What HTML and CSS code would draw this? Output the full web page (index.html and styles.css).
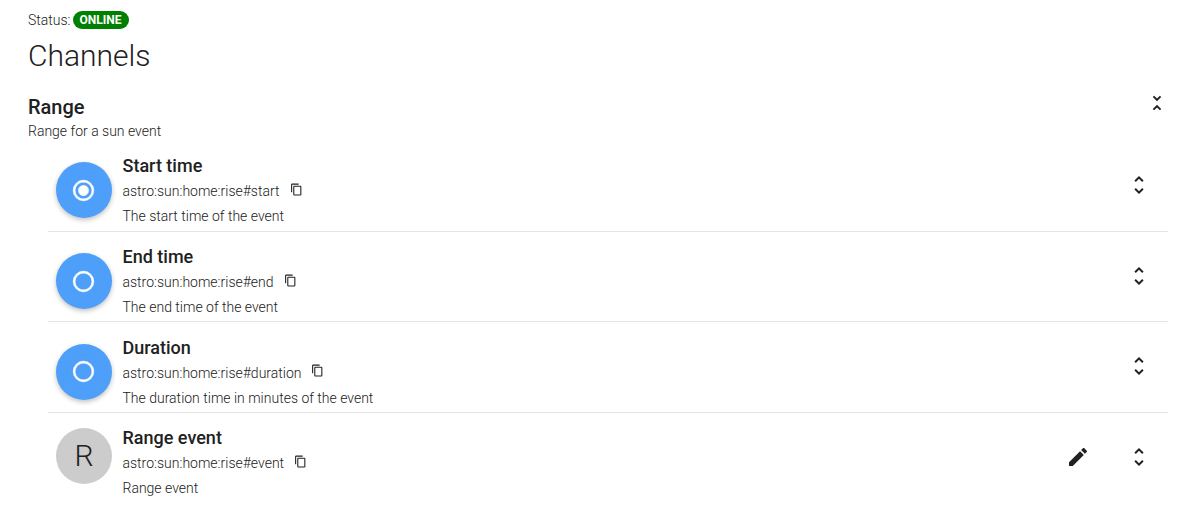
FILE: index.html
```html
<!DOCTYPE html>
<html lang="en">
<head>
    <meta charset="UTF-8">
    <title>Channels</title>
    <link rel="stylesheet" href="styles.css">
</head>
<body>

<div class="status-line">Status: <span class="badge">ONLINE</span></div>
<h1 class="page-title">Channels</h1>

<div class="group-head">
    <div>
        <h2 class="group-title">Range</h2>
        <div class="group-desc">Range for a sun event</div>
    </div>
    <svg class="toggle-group" viewBox="0 0 24 24"><path d="M16.59,5.41L15.17,4L12,7.17L8.83,4L7.41,5.41L12,10L16.59,5.41M7.41,18.59L8.83,20L12,16.83L15.17,20L16.58,18.59L12,14L7.41,18.59Z"/></svg>
</div>

<div class="channels">
    <div class="channel">
        <div class="avatar blue">
            <svg class="radio" viewBox="0 0 24 24"><path d="M12,20A8,8 0 0,1 4,12A8,8 0 0,1 12,4A8,8 0 0,1 20,12A8,8 0 0,1 12,20M12,2A10,10 0 0,0 2,12A10,10 0 0,0 12,22A10,10 0 0,0 22,12A10,10 0 0,0 12,2M12,7A5,5 0 0,0 7,12A5,5 0 0,0 12,17A5,5 0 0,0 17,12A5,5 0 0,0 12,7Z"/></svg>
        </div>
        <div class="info">
            <div class="name">Start time</div>
            <div class="uid">astro:sun:home:rise#start
                <svg class="copy" viewBox="0 0 24 24"><path d="M19,21H8V7H19M19,5H8A2,2 0 0,0 6,7V21A2,2 0 0,0 8,23H19A2,2 0 0,0 21,21V7A2,2 0 0,0 19,5M16,1H4A2,2 0 0,0 2,3V17H4V3H16V1Z"/></svg>
            </div>
            <div class="desc">The start time of the event</div>
        </div>
        <svg class="icon" viewBox="0 0 24 24"><path d="M12,18.17L8.83,15L7.42,16.41L12,21L16.59,16.41L15.17,15M12,5.83L15.17,9L16.58,7.59L12,3L7.41,7.59L8.83,9L12,5.83Z"/></svg>
    </div>
    <div class="channel">
        <div class="avatar blue">
            <svg class="radio" viewBox="0 0 24 24"><path d="M12,20A8,8 0 0,1 4,12A8,8 0 0,1 12,4A8,8 0 0,1 20,12A8,8 0 0,1 12,20M12,2A10,10 0 0,0 2,12A10,10 0 0,0 12,22A10,10 0 0,0 22,12A10,10 0 0,0 12,2Z"/></svg>
        </div>
        <div class="info">
            <div class="name">End time</div>
            <div class="uid">astro:sun:home:rise#end
                <svg class="copy" viewBox="0 0 24 24"><path d="M19,21H8V7H19M19,5H8A2,2 0 0,0 6,7V21A2,2 0 0,0 8,23H19A2,2 0 0,0 21,21V7A2,2 0 0,0 19,5M16,1H4A2,2 0 0,0 2,3V17H4V3H16V1Z"/></svg>
            </div>
            <div class="desc">The end time of the event</div>
        </div>
        <svg class="icon" viewBox="0 0 24 24"><path d="M12,18.17L8.83,15L7.42,16.41L12,21L16.59,16.41L15.17,15M12,5.83L15.17,9L16.58,7.59L12,3L7.41,7.59L8.83,9L12,5.83Z"/></svg>
    </div>
    <div class="channel">
        <div class="avatar blue">
            <svg class="radio" viewBox="0 0 24 24"><path d="M12,20A8,8 0 0,1 4,12A8,8 0 0,1 12,4A8,8 0 0,1 20,12A8,8 0 0,1 12,20M12,2A10,10 0 0,0 2,12A10,10 0 0,0 12,22A10,10 0 0,0 22,12A10,10 0 0,0 12,2Z"/></svg>
        </div>
        <div class="info">
            <div class="name">Duration</div>
            <div class="uid">astro:sun:home:rise#duration
                <svg class="copy" viewBox="0 0 24 24"><path d="M19,21H8V7H19M19,5H8A2,2 0 0,0 6,7V21A2,2 0 0,0 8,23H19A2,2 0 0,0 21,21V7A2,2 0 0,0 19,5M16,1H4A2,2 0 0,0 2,3V17H4V3H16V1Z"/></svg>
            </div>
            <div class="desc">The duration time in minutes of the event</div>
        </div>
        <svg class="icon" viewBox="0 0 24 24"><path d="M12,18.17L8.83,15L7.42,16.41L12,21L16.59,16.41L15.17,15M12,5.83L15.17,9L16.58,7.59L12,3L7.41,7.59L8.83,9L12,5.83Z"/></svg>
    </div>
    <div class="channel">
        <div class="avatar grey">R</div>
        <div class="info">
            <div class="name">Range event</div>
            <div class="uid">astro:sun:home:rise#event
                <svg class="copy" viewBox="0 0 24 24"><path d="M19,21H8V7H19M19,5H8A2,2 0 0,0 6,7V21A2,2 0 0,0 8,23H19A2,2 0 0,0 21,21V7A2,2 0 0,0 19,5M16,1H4A2,2 0 0,0 2,3V17H4V3H16V1Z"/></svg>
            </div>
            <div class="desc">Range event</div>
        </div>
        <svg class="icon edit" viewBox="0 0 24 24"><path d="M20.71,7.04C21.1,6.65 21.1,6 20.71,5.63L18.37,3.29C18,2.9 17.35,2.9 16.96,3.29L15.12,5.12L18.87,8.87M3,17.25V21H6.75L17.81,9.93L14.06,6.18L3,17.25Z"/></svg>
        <svg class="icon" viewBox="0 0 24 24"><path d="M12,18.17L8.83,15L7.42,16.41L12,21L16.59,16.41L15.17,15M12,5.83L15.17,9L16.58,7.59L12,3L7.41,7.59L8.83,9L12,5.83Z"/></svg>
    </div>
</div>

</body>
</html>
```

FILE: styles.css
```css
body {
    margin: 0;
    padding: 10px 23px 0 28px;
    background-color: #fff;
    color: #212121;
    font-family: Roboto, "Liberation Sans", sans-serif;
    overflow: hidden;
}
.status-line {
    display: flex;
    align-items: center;
    gap: 2px;
    height: 20px;
    font-size: 14px;
    font-weight: 300;
}
.badge {
    display: inline-block;
    padding: 0 7px;
    height: 18px;
    line-height: 18px;
    border-radius: 9px;
    background-color: #008000;
    color: #fff;
    font-size: 12px;
    font-weight: 700;
}
.page-title {
    margin: 5px 0 0;
    font-size: 30px;
    line-height: 42px;
    font-weight: 300;
}
.group-head {
    display: flex;
    justify-content: space-between;
    align-items: flex-start;
    margin-top: 16px;
}
.group-title {
    margin: 0;
    font-size: 20px;
    line-height: 28px;
    font-weight: 500;
}
.group-desc {
    font-size: 14px;
    line-height: 20px;
    font-weight: 300;
}
.toggle-group {
    flex: none;
    width: 22px;
    height: 22px;
    margin-top: -1px;
    fill: #212121;
}
.channels {
    margin-left: 20px;
}
.channel {
    display: flex;
    align-items: center;
    height: 89.7px;
    padding: 0 17.5px 0 8px;
    border-bottom: 1px solid #e4e4e4;
}
.channel:last-child {
    border-bottom: none;
}
.avatar {
    flex: none;
    display: flex;
    justify-content: center;
    align-items: center;
    width: 56px;
    height: 56px;
    border-radius: 50%;
    margin-right: 10.5px;
    font-size: 30px;
    font-weight: 300;
}
.blue {
    margin-top: 9px;
    background-color: #4d9ffa;
    box-shadow: 0 2px 5px rgba(0, 0, 0, 0.25);
}
.grey {
    margin-bottom: 4px;
    background-color: #ccc;
}
.radio {
    width: 25px;
    height: 25px;
    margin-left: -1px;
    fill: #fff;
    stroke: #fff;
    stroke-width: 0.4;
}
.info {
    flex: 1;
    margin-top: 11px;
}
.name {
    font-size: 18px;
    line-height: 24px;
    font-weight: 500;
}
.uid {
    display: flex;
    align-items: center;
    gap: 10px;
    font-size: 14px;
    line-height: 26px;
    font-weight: 300;
}
.desc {
    font-size: 14px;
    line-height: 24px;
    font-weight: 300;
}
.copy {
    width: 13px;
    height: 13px;
    margin-top: -4px;
    fill: #212121;
}
.icon {
    flex: none;
    width: 24px;
    height: 24px;
    margin-bottom: 1.5px;
    fill: #212121;
}
.edit {
    margin-right: 37px;
}
```
